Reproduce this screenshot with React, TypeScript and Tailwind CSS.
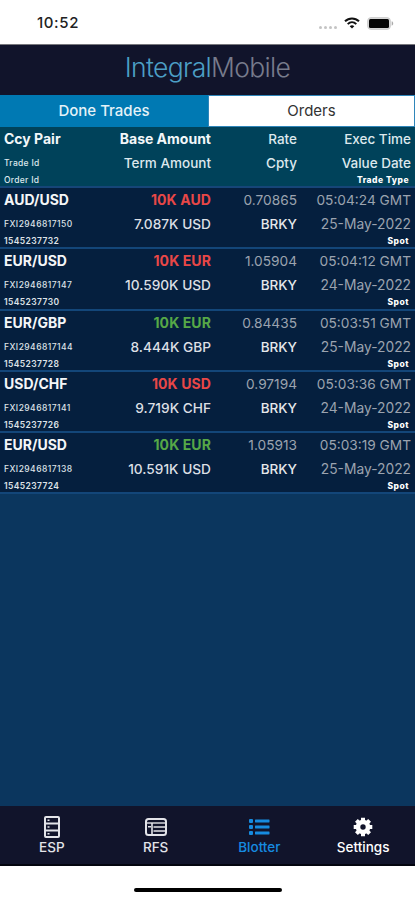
import React from 'react';

interface Trade {
  pair: string;
  tradeId: string;
  orderId: string;
  base: string;
  side: 'buy' | 'sell';
  term: string;
  rate: string;
  time: string;
  date: string;
}

const trades: Trade[] = [
  { pair: 'AUD/USD', tradeId: 'FXI2946817150', orderId: '1545237732', base: '10K AUD', side: 'sell', term: '7.087K USD', rate: '0.70865', time: '05:04:24 GMT', date: '25-May-2022' },
  { pair: 'EUR/USD', tradeId: 'FXI2946817147', orderId: '1545237730', base: '10K EUR', side: 'sell', term: '10.590K USD', rate: '1.05904', time: '05:04:12 GMT', date: '24-May-2022' },
  { pair: 'EUR/GBP', tradeId: 'FXI2946817144', orderId: '1545237728', base: '10K EUR', side: 'buy', term: '8.444K GBP', rate: '0.84435', time: '05:03:51 GMT', date: '25-May-2022' },
  { pair: 'USD/CHF', tradeId: 'FXI2946817141', orderId: '1545237726', base: '10K USD', side: 'sell', term: '9.719K CHF', rate: '0.97194', time: '05:03:36 GMT', date: '24-May-2022' },
  { pair: 'EUR/USD', tradeId: 'FXI2946817138', orderId: '1545237724', base: '10K EUR', side: 'buy', term: '10.591K USD', rate: '1.05913', time: '05:03:19 GMT', date: '25-May-2022' },
];

const StatusBar = () => (
  <div className="h-[45px] shrink-0 bg-white flex items-start justify-between pl-[37px] pr-[21px] pt-[13px] border-b border-[#77777c]">
    <span className="text-[15px] leading-5 font-medium text-[#222] tracking-[0.6px]">10:52</span>
    <div className="flex items-center h-5">
      <div className="flex gap-[2px] mt-2 mr-[7px]">
        {[0, 1, 2, 3].map((dot) => (
          <span key={dot} className="size-[3px] rounded-full bg-[#c4c4c4]" />
        ))}
      </div>
      <svg width="16" height="12" viewBox="0 0 16 12" className="mr-[7px]" fill="none" stroke="#111" strokeWidth="2">
        <path d="M1 4.3C5 .4 11 .4 15 4.3" />
        <path d="M3.7 7.1C6.2 4.7 9.8 4.7 12.3 7.1" />
        <path d="M8 11.6 5.7 9.2C7 8 9 8 10.3 9.2Z" fill="#111" stroke="none" />
      </svg>
      <svg width="27" height="13" viewBox="0 0 27 13">
        <rect x=".6" y=".6" width="22.8" height="11.8" rx="3.4" fill="#d8d8d8" stroke="#cfcfcf" />
        <rect x="2" y="2" width="20" height="9" rx="1.5" fill="#050505" />
        <path d="M24.7 4.3C26.7 5 26.7 8 24.7 8.7Z" fill="#aaa" />
      </svg>
    </div>
  </div>
);

const HeaderRow = () => (
  <div className="h-[61px] shrink-0 bg-[#00425a] border-b-2 border-[#164578] pl-[4px] grid grid-cols-[84px_123px_86px_114px] text-[13.5px] text-[#dde8ed]">
    <div className="flex flex-col">
      <span className="h-6 leading-6 text-[14px] font-bold text-[#f2f7f9]">Ccy Pair</span>
      <span className="h-6 leading-6 text-[8.5px] font-medium tracking-[0.3px]">Trade Id</span>
      <span className="h-[11px] leading-[11px] text-[8.5px] font-medium tracking-[0.3px]">Order Id</span>
    </div>
    <div className="flex flex-col text-right">
      <span className="h-6 leading-6 text-[14px] font-bold text-[#f2f7f9]">Base Amount</span>
      <span className="h-6 leading-6 font-medium">Term Amount</span>
    </div>
    <div className="flex flex-col text-right font-medium">
      <span className="h-6 leading-6">Rate</span>
      <span className="h-6 leading-6">Cpty</span>
    </div>
    <div className="flex flex-col text-right">
      <span className="h-6 leading-6 font-medium">Exec Time</span>
      <span className="h-6 leading-6 font-medium">Value Date</span>
      <span className="h-[11px] leading-[11px] text-[8.5px] font-extrabold tracking-[0.5px] pr-[2px] text-white">Trade Type</span>
    </div>
  </div>
);

const TradeRow: React.FC<{ trade: Trade }> = ({ trade }) => (
  <div className="h-[61.3px] shrink-0 bg-[#051f3e] border-b-2 border-[#134679] pl-[4px] grid grid-cols-[84px_123px_86px_114px] text-[13.5px]">
    <div className="flex flex-col text-[#dfe3e8]">
      <span className="h-6 leading-6 text-[14px] font-bold text-[#f4f6f8]">{trade.pair}</span>
      <span className="h-6 leading-6 text-[8.5px] font-medium tracking-[0.45px]">{trade.tradeId}</span>
      <span className="h-[11px] leading-[11px] text-[8.5px] font-semibold tracking-[0.4px]">{trade.orderId}</span>
    </div>
    <div className="flex flex-col text-right">
      <span className={`h-6 leading-6 text-[14px] font-bold tracking-[0.1px] ${trade.side === 'sell' ? 'text-[#e84747]' : 'text-[#56a847]'}`}>{trade.base}</span>
      <span className="h-6 leading-6 font-medium text-[13.7px] text-[#dcdfe4]">{trade.term}</span>
    </div>
    <div className="flex flex-col text-right">
      <span className="h-6 leading-6 text-[13.7px] text-[#9ba3af]">{trade.rate}</span>
      <span className="h-6 leading-6 font-medium text-[#e6e8eb]">BRKY</span>
    </div>
    <div className="flex flex-col text-right text-[#9ba3af]">
      <span className="h-6 leading-6 text-[13.7px]">{trade.time}</span>
      <span className="h-6 leading-6 text-[13.8px]">{trade.date}</span>
      <span className="h-[11px] leading-[11px] text-[8.5px] font-extrabold tracking-[0.5px] pr-[2px] text-white">Spot</span>
    </div>
  </div>
);

const EspIcon = () => (
  <svg width="18" height="22" viewBox="0 0 18 22" fill="none" stroke="currentColor" strokeWidth="2">
    <rect x="2" y="1" width="14" height="20" rx="1" />
    <path d="M2 7.5H16M2 14.5H16" strokeWidth="1.8" />
    <path d="M4.5 4.3H6.5M4.5 11H6.5M4.5 17.7H6.5" strokeWidth="1.4" />
  </svg>
);

const RfsIcon = () => (
  <svg width="22" height="18" viewBox="0 0 22 18" fill="none" stroke="currentColor" strokeWidth="2">
    <rect x="1" y="1" width="20" height="16" rx="2.5" />
    <path d="M1 5H21" strokeWidth="1.4" />
    <path d="M8.5 9H21M8.5 13H21M7 5V17M3 8.7H6" strokeWidth="1.6" />
  </svg>
);

const BlotterIcon = () => (
  <svg width="22" height="18" viewBox="0 0 22 18" fill="currentColor">
    <rect x="1" y="1" width="4" height="4" rx="1" />
    <rect x="1" y="7" width="4" height="4" rx="1" />
    <rect x="1" y="13" width="4" height="4" rx="1" />
    <rect x="7" y="1.5" width="14.5" height="3" rx=".4" />
    <rect x="7" y="7.5" width="14.5" height="3" rx=".4" />
    <rect x="7" y="13.5" width="14.5" height="3" rx=".4" />
  </svg>
);

const SettingsIcon = () => (
  <svg width="20" height="20" viewBox="-10 -10 20 20" fill="none" stroke="currentColor">
    <circle r="5" strokeWidth="4.6" />
    {[0, 45, 90, 135].map((angle) => (
      <path key={angle} d="M0-9.3V-6M0 6V9.3" strokeWidth="4" transform={`rotate(${angle})`} />
    ))}
  </svg>
);

const navItems = [
  { label: 'ESP', icon: <EspIcon />, active: false, color: 'text-[#e3e4e9]' },
  { label: 'RFS', icon: <RfsIcon />, active: false, color: 'text-[#e3e4e9]' },
  { label: 'Blotter', icon: <BlotterIcon />, active: true, color: 'text-[#168be0]' },
  { label: 'Settings', icon: <SettingsIcon />, active: false, color: 'text-white' },
];

const App: React.FC = () => {
  return (
    <div className="w-[415px] h-[900px] flex flex-col overflow-hidden bg-white font-['Inter',sans-serif]">
      <StatusBar />
      <header className="h-[50px] shrink-0 bg-[#11142b] flex justify-center text-[26.5px] leading-[45px] font-light tracking-[-0.7px]">
        <span className="text-[#4c9fc5]">Integral</span>
        <span className="text-[#777b8c]">Mobile</span>
      </header>
      <div className="h-8 shrink-0 flex text-[15px] leading-8 text-center">
        <div className="w-[208px] bg-[#0079b3] text-[#e4f2f8] font-medium">Done Trades</div>
        <div className="flex-1 bg-white text-[#333] border border-[#2f86ba] leading-[30px]">Orders</div>
      </div>
      <main className="flex-1 min-h-0 flex flex-col bg-[#0b365e]">
        <HeaderRow />
        {trades.map((trade) => (
          <TradeRow key={trade.orderId} trade={trade} />
        ))}
      </main>
      <nav className="h-[60px] shrink-0 bg-[#11142b] border-b-2 border-[#03050f] grid grid-cols-4 text-[13.5px] font-medium">
        {navItems.map((item) => (
          <div key={item.label} aria-current={item.active} className={`flex flex-col items-center pt-[10px] ${item.color}`}>
            <div className="h-[22px] flex items-center">{item.icon}</div>
            <span className="leading-[18px]">{item.label}</span>
          </div>
        ))}
      </nav>
      <div className="h-[34px] shrink-0 bg-white flex justify-center pt-[22px]">
        <div className="w-[148px] h-[4px] rounded-full bg-black" />
      </div>
    </div>
  );
};

export default App;
